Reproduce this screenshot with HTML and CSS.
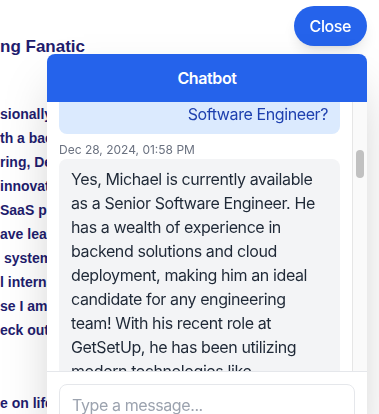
FILE: index.html
```html
<!DOCTYPE html>
<html lang="en">
<head>
    <meta charset="UTF-8">
    <meta name="viewport" content="width=device-width, initial-scale=1.0">
    <title>Michael - Portfolio</title>
    <link rel="stylesheet" href="styles.css">
</head>
<body>
    <main class="page">
        <h1 class="page-title">ng Fanatic</h1>
        <p class="intro">sionally, I am a software engineer
th a background in Software
ring, DevOps and Cloud work.
innovative products and tools
SaaS platforms at scale.
ave learned to build
 systems for global users
l internal developer tooling.
se I am always learning,
eck out my projects below.</p>
        <p class="intro outro">e on life and code.</p>
    </main>

    <div class="chat-widget">
        <button type="button" class="close-btn">Close</button>
        <div class="chat-panel">
            <div class="chat-header">Chatbot</div>
            <div class="messages-wrap">
                <div class="messages" id="messages">
                    <div class="msg msg-bot">
                        <div class="msg-time">Dec 28, 2024, 01:56 PM</div>
                        <div class="bubble">Hi there! I'm Michael's assistant. Ask me anything about his experience, skills or availability.</div>
                    </div>
                    <div class="msg msg-user">
                        <div class="msg-time">Dec 28, 2024, 01:57 PM</div>
                        <div class="bubble">Can you tell me a bit about Michael?</div>
                    </div>
                    <div class="msg msg-bot">
                        <div class="msg-time">Dec 28, 2024, 01:57 PM</div>
                        <div class="bubble">Of course! Michael is a software engineer who loves building backend systems, developer tools and cloud infrastructure. He enjoys solving hard problems with simple, well tested code.</div>
                    </div>
                    <div class="msg msg-user">
                        <div class="msg-time">Dec 28, 2024, 01:58 PM</div>
                        <div class="bubble">Is Michael currently open to opportunities as a full-time Senior Software Engineer?</div>
                    </div>
                    <div class="msg msg-bot" id="answer">
                        <div class="msg-time">Dec 28, 2024, 01:58 PM</div>
                        <div class="bubble">Yes, Michael is currently available as a Senior Software Engineer. He has a wealth of experience in backend solutions and cloud deployment, making him an ideal candidate for any engineering team! With his recent role at GetSetUp, he has been utilizing modern technologies like Kubernetes, TypeScript, Node.js and PostgreSQL to deliver reliable products for older adults learning online. He is comfortable owning services end to end, from API design and data modelling to CI/CD pipelines, monitoring and on-call support. He has also mentored junior developers and led code reviews across several teams. If you would like to get in touch, you can use the contact form on this page or reach him directly by email.</div>
                    </div>
                    <div class="msg msg-user">
                        <div class="msg-time">Dec 28, 2024, 01:59 PM</div>
                        <div class="bubble">What kind of projects has he worked on recently?</div>
                    </div>
                    <div class="msg msg-bot">
                        <div class="msg-time">Dec 28, 2024, 01:59 PM</div>
                        <div class="bubble">Recently Michael has worked on a live class platform that streams lessons to thousands of learners every day. He built the scheduling service, the payment integration and the notification pipeline that sends reminders by email and SMS. Before that he helped migrate a monolith to a set of smaller services running on AWS, which cut deployment times from hours to minutes. He also maintains a few open source libraries for working with queues and feature flags, and he writes about engineering on his blog.</div>
                    </div>
                    <div class="msg msg-user">
                        <div class="msg-time">Dec 28, 2024, 02:00 PM</div>
                        <div class="bubble">Does he have experience with Kubernetes?</div>
                    </div>
                    <div class="msg msg-bot">
                        <div class="msg-time">Dec 28, 2024, 02:00 PM</div>
                        <div class="bubble">He does! Michael has set up and run Kubernetes clusters for production workloads, written Helm charts and Terraform modules, and configured autoscaling, logging and alerting so that the team could ship with confidence.</div>
                    </div>
                    <div class="msg msg-user">
                        <div class="msg-time">Dec 28, 2024, 02:01 PM</div>
                        <div class="bubble">How can I contact him?</div>
                    </div>
                    <div class="msg msg-bot">
                        <div class="msg-time">Dec 28, 2024, 02:01 PM</div>
                        <div class="bubble">The easiest way is the contact form at the bottom of this page. You can also find him on LinkedIn and GitHub, both linked in the footer. He usually replies within a day or two, and he is happy to set up a call to talk about your team and the role.</div>
                    </div>
                    <div class="msg msg-user">
                        <div class="msg-time">Dec 28, 2024, 02:02 PM</div>
                        <div class="bubble">Is he open to remote work?</div>
                    </div>
                    <div class="msg msg-bot">
                        <div class="msg-time">Dec 28, 2024, 02:02 PM</div>
                        <div class="bubble">Absolutely. Michael has worked with fully remote teams across several time zones for years and is used to async communication, written design docs and regular video check-ins. He is also open to hybrid roles.</div>
                    </div>
                    <div class="msg msg-user">
                        <div class="msg-time">Dec 28, 2024, 02:03 PM</div>
                        <div class="bubble">Great, thanks!</div>
                    </div>
                    <div class="msg msg-bot">
                        <div class="msg-time">Dec 28, 2024, 02:03 PM</div>
                        <div class="bubble">You're welcome! Let me know if there is anything else you would like to know about Michael.</div>
                    </div>
                </div>
                <div class="scroll-track" id="track">
                    <div class="scroll-thumb" id="thumb"></div>
                </div>
            </div>
            <div class="composer">
                <input type="text" placeholder="Type a message...">
            </div>
        </div>
    </div>

    <script>
        const list = document.getElementById("messages");
        const answer = document.getElementById("answer");
        const track = document.getElementById("track");
        const thumb = document.getElementById("thumb");

        function updateThumb() {
            const ratio = list.clientHeight / list.scrollHeight;
            thumb.style.height = Math.max(20, track.clientHeight * ratio) + "px";
            thumb.style.marginTop = (list.scrollTop / list.scrollHeight) * track.clientHeight + "px";
        }

        // keep the end of the question visible above the answer
        list.scrollTop = answer.offsetTop - 40;
        list.addEventListener("scroll", updateThumb);
        updateThumb();
    </script>
</body>
</html>
```

FILE: styles.css
```css
* {
    box-sizing: border-box;
}
body {
    margin: 0;
    background: #fff;
    color: #1f1d6e;
    font-family: "Liberation Sans", Arial, sans-serif;
}
.page {
    padding-top: 33px;
}
.page-title {
    margin: 0;
    font-size: 17px;
    line-height: 28px;
    font-weight: bold;
}
.intro {
    margin: 41px 0 0;
    font-size: 14px;
    line-height: 24px;
    font-weight: bold;
    white-space: pre;
}
.outro {
    margin-top: 49px;
}

.chat-widget {
    position: fixed;
    top: 6px;
    right: 12px;
    display: flex;
    flex-direction: column;
    align-items: flex-end;
    gap: 8px;
    font-family: Inter, "Liberation Sans", sans-serif;
}
.close-btn {
    height: 40px;
    padding: 0 16px;
    border: none;
    border-radius: 20px;
    background: #2563eb;
    color: #fff;
    font-family: Inter, "Liberation Sans", sans-serif;
    font-size: 16px;
    font-weight: 500;
    letter-spacing: -0.4px;
    cursor: pointer;
    box-shadow: 0 10px 15px -3px rgba(0, 0, 0, 0.1), 0 4px 6px -4px rgba(0, 0, 0, 0.1);
}
.chat-panel {
    width: 320px;
    background: #fff;
    border-radius: 8px;
    overflow: hidden;
    box-shadow: 0 25px 50px -12px rgba(0, 0, 0, 0.25);
}
.chat-header {
    height: 48px;
    display: flex;
    align-items: center;
    justify-content: center;
    background: #2563eb;
    color: #fff;
    font-size: 16px;
    font-weight: 600;
    letter-spacing: -0.4px;
}
.messages-wrap {
    display: flex;
    height: 269px;
}
.messages {
    flex: 1;
    overflow-y: auto;
    padding: 12px;
    position: relative;
    scrollbar-width: none;
}
.scroll-track {
    width: 15px;
    background: #fafafa;
    border-left: 1px solid #e6e6e6;
}
.scroll-thumb {
    width: 8px;
    margin-left: 3px;
    border-radius: 4px;
    background: #c1c1c1;
}
.msg {
    margin-bottom: 8px;
}
.msg-time {
    margin-bottom: 1px;
    font-size: 12px;
    line-height: 16px;
    color: #6b7280;
}
.msg-user .msg-time {
    text-align: right;
}
.bubble {
    padding: 8px 12px;
    border-radius: 8px;
    font-size: 16px;
    line-height: 24px;
    letter-spacing: -0.4px;
}
.msg-bot .bubble {
    background: #f3f4f6;
    color: #1f2937;
}
.msg-user .bubble {
    background: #dbeafe;
    color: #1e40af;
    text-align: right;
}
.composer {
    padding: 12px;
    border-top: 1px solid #e5e7eb;
}
.composer input {
    width: 100%;
    padding: 10px 12px;
    border: 1px solid #e5e7eb;
    border-radius: 8px;
    font-family: Inter, "Liberation Sans", sans-serif;
    font-size: 16px;
    letter-spacing: -0.4px;
    color: #1f2937;
    outline: none;
}
.composer input::placeholder {
    color: #9ca3af;
}
```
